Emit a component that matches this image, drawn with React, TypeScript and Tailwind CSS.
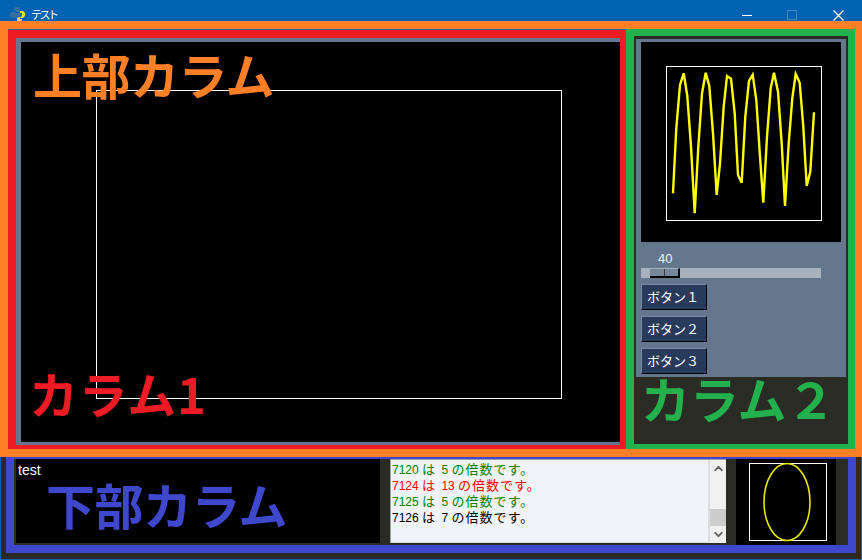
import React from 'react';
import { ChevronDown, ChevronUp } from 'lucide-react';

const jp = "font-['Liberation_Sans','Noto_Sans_CJK_JP',sans-serif]";

// wave points read off the graph, in canvas pixels
const wave = [
  [159, 580], [169, 385], [180, 255], [191, 220], [202, 288], [213, 440], [224, 640], [235, 440],
  [246, 280], [257, 218], [268, 258], [279, 400], [290, 585], [300, 490], [311, 320], [321, 228],
  [333, 236], [344, 340], [354, 525], [365, 548], [376, 350], [387, 243], [398, 224], [409, 300],
  [420, 470], [430, 608], [441, 410], [452, 265], [462, 218], [474, 275], [485, 430], [495, 618],
  [506, 430], [517, 295], [527, 222], [539, 248], [550, 380], [560, 558], [571, 515], [582, 337],
]
  .map(([x, y]) => `${(x / 3 - 21).toFixed(1)},${(y / 3 - 42).toFixed(1)}`)
  .join(' ');

const logLines = [
  { n: 7120, d: 5, color: 'text-[#008000]' },
  { n: 7124, d: 13, color: 'text-[#ff0000]' },
  { n: 7125, d: 5, color: 'text-[#008000]' },
  { n: 7126, d: 7, color: 'text-black' },
];

const TitleBar = () => (
  <div className="h-[21px] bg-[#0063b1] flex items-start pl-[9px] pt-[6px] shrink-0 overflow-hidden">
    <svg width="16" height="16" viewBox="0 0 16 16" className="shrink-0 mt-px">
      <path d="M7 0h3l1 1v4H6v1h5l1 1v1l-2 1H8L7 11H3L1 9V6l2-1h3V3H5V1z" fill="#3a6f9f" />
      <path d="M11 4h3l2 2v3l-2 2h-3v1h2v2l-2 1H9l-1-1v-3l1-1h3l1-2V6h-2z" fill="#f5d94e" />
    </svg>
    <span className={`ml-[6px] mt-[2px] text-[11px] leading-[14px] tracking-[-2.5px] text-white ${jp}`}>テスト</span>
    <div className="ml-auto flex items-center h-[18px]">
      <div className="w-[10px] h-px bg-white mr-[35px]" />
      <div className="w-[10px] h-[10px] border border-[#3f86c0] mr-[36px]" />
      <svg width="11" height="11" viewBox="0 0 11 11" className="mr-[18px]">
        <path d="M0.5 0.5l10 10M10.5 0.5l-10 10" stroke="white" strokeWidth="1.2" />
      </svg>
    </div>
  </div>
);

const BigLabel = ({ text, className }: { text: string; className: string }) => (
  <span className={`absolute whitespace-nowrap font-bold text-[49px] leading-[40px] font-['Noto_Sans_CJK_JP',sans-serif] ${className}`}>
    {text}
  </span>
);

const Btn = ({ label }: { label: string }) => (
  <button className={`w-[66px] h-[26px] bg-[#283b5b] text-white text-[13px] text-left pl-[5px] pt-px border border-t-[#7286a5] border-l-[#7286a5] border-b-black border-r-black ${jp}`}>
    {label}
  </button>
);

const LeftColumn = () => (
  <div className="w-[618px] border-t border-[#2f5fa8]">
    <div className="relative h-full border-[8px] border-r-[6px] border-b-[4px] border-[#ed1c24] bg-[#64778d] pl-[5px] pt-[4px] pb-[3px]">
      <div className="w-full h-full bg-black">
        <svg width="599" height="400" className="block">
          <rect x="75.5" y="48.5" width="465" height="308" fill="none" stroke="white" />
        </svg>
      </div>
      <BigLabel text="上部カラム" className="left-[17px] top-[16px] tracking-[-0.5px] text-[#ff7f27]" />
      <BigLabel text="カラム1" className="left-[13px] top-[335px] tracking-[0.8px] text-[#ed1c24]" />
    </div>
  </div>
);

const RightColumn = () => (
  <div className="relative w-[229px] border-[8px] border-r-[7px] border-t-[7px] border-b-[5px] border-[#22b14c] bg-[#2b2b25] px-[2px] pt-[3px]">
    <div className="h-[338px] bg-[#64778d] pt-[3px] px-[5px]">
      <div className="w-[200px] h-[200px] bg-black">
        <svg width="200" height="200" className="block">
          <rect x="25.5" y="24.5" width="155" height="154" fill="none" stroke="white" />
          <polyline points={wave} fill="none" stroke="#ffff00" strokeWidth="2.4" />
        </svg>
      </div>
      <div className={`mt-[8px] ml-[17px] h-[18px] text-[13px] leading-[17px] text-[#e8eef5] ${jp}`}>40</div>
      <div className="w-[180px] h-[10px] bg-[#a6b2be] pl-[9px]">
        <div className="w-[30px] h-[10px] flex bg-[#75869b] border-t border-t-[#a6b2be] border-b-2 border-r-2 border-b-black border-r-black">
          <div className="flex-1 border-r border-[#3a3a3a]" />
          <div className="flex-1" />
        </div>
      </div>
      <div className="mt-[6px] flex flex-col items-start gap-[6px]">
        <Btn label="ボタン１" />
        <Btn label="ボタン２" />
        <Btn label="ボタン３" />
      </div>
    </div>
    <BigLabel text="カラム２" className="left-[7px] top-[342px] text-[#22b14c]" />
  </div>
);

const BottomRow = () => (
  <div className="flex-1 bg-[#2b2b25] pl-[5px] pr-[5px] border-x border-b border-[#0063b1] min-h-0">
    <div className="relative h-[96px] border-[8px] border-[#3f48cc] border-t-2 flex pl-[2px] bg-[#2b2b25]">
      <div className={`w-[364px] h-[84px] bg-black text-white text-[14px] leading-none pl-[2px] pt-[4px] ${jp}`}>test</div>
      <div className="ml-[10px] w-[336px] h-[84px] flex bg-[#f0f3f7] border-l border-t border-[#9aa0a8]">
        <div className={`flex-1 pl-[1px] pt-[2px] text-[12px] leading-[16px] border-r-2 border-b border-[#d8dce4] ${jp}`}>
          {logLines.map((l) => (
            <div key={l.n} className={`whitespace-nowrap ${l.color}`}>
              {l.n} <span className="text-[13px] mr-[3px]">は</span> {l.d}{' '}
              <span className="text-[13px] tracking-[1px]">の倍数です。</span>
            </div>
          ))}
        </div>
        <div className="w-[16px] h-full bg-[#f0f0f0] flex flex-col items-center py-[2px]">
          <ChevronUp size={13} strokeWidth={3.5} className="text-[#606060] shrink-0" />
          <div className="w-[16px] h-[17px] bg-[#cdcdcd] mt-[34px] shrink-0" />
          <ChevronDown size={13} strokeWidth={3.5} className="text-[#606060] mt-[2px] shrink-0" />
        </div>
      </div>
      <div className="ml-[10px] w-[100px] h-[86px] bg-black">
        <svg width="100" height="86" className="block">
          <rect x="13.5" y="4.5" width="77" height="77" fill="none" stroke="white" />
          <ellipse cx="51" cy="43" rx="23" ry="38.5" fill="none" stroke="#e6e600" strokeWidth="1.6" />
        </svg>
      </div>
      <BigLabel text="下部カラム" className="left-[32px] top-[25px] tracking-[-0.5px] text-[#3f48cc]" />
    </div>
  </div>
);

export default function App() {
  return (
    <div className="w-[862px] h-[560px] flex flex-col overflow-hidden bg-[#2b2b25]">
      <TitleBar />
      <div className="relative h-[436px] shrink-0 bg-[#ff7f27] border-[8px] border-r-[7px] border-b-[8px] border-[#ff7f27] flex">
        <LeftColumn />
        <RightColumn />
      </div>
      <BottomRow />
    </div>
  );
}
